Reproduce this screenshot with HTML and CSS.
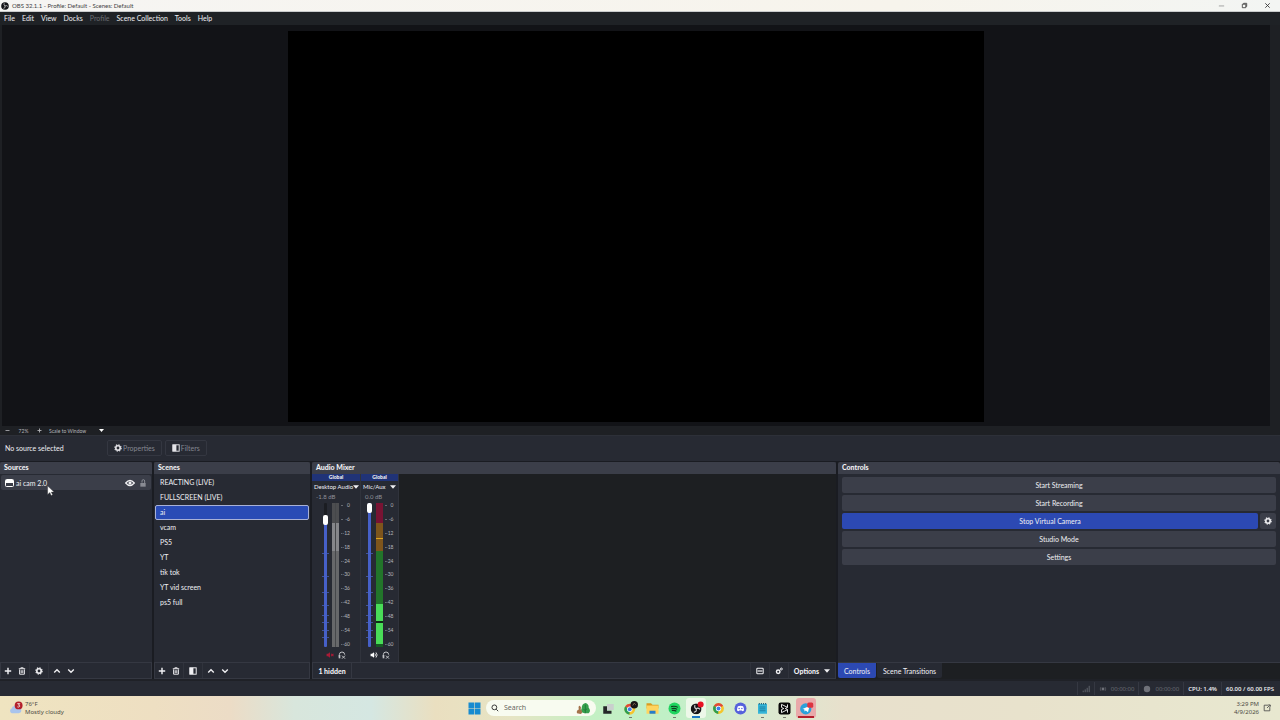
FILE: index.html
```html
<!DOCTYPE html>
<html lang="en">
<head>
<meta charset="utf-8">
<title>OBS 32.1.1 - Profile: Default - Scenes: Default</title>
<link rel="stylesheet" href="styles.css">
</head>
<body>
<svg class="defs" aria-hidden="true">
  <symbol id="plus" viewBox="0 0 10 10"><path d="M5 1v8M1 5h8" stroke="currentColor" stroke-width="1.8"/></symbol>
  <symbol id="minus" viewBox="0 0 10 10"><path d="M1 5h8" stroke="currentColor" stroke-width="1.6"/></symbol>
  <symbol id="trash" viewBox="0 0 10 10"><path d="M1 2.2h8M3.5 2V1h3v1M2 3v6h6V3M4 4v3.6M6 4v3.6" fill="none" stroke="currentColor" stroke-width="1.2"/></symbol>
  <symbol id="gear" viewBox="0 0 12 12"><circle cx="6" cy="6" r="3.3" fill="none" stroke="currentColor" stroke-width="2.4"/><circle cx="6" cy="6" r="4.8" fill="none" stroke="currentColor" stroke-width="1.6" stroke-dasharray="2 1.77"/></symbol>
  <symbol id="up" viewBox="0 0 10 10"><path d="M1.5 7L5 3.5 8.500 7" fill="none" stroke="currentColor" stroke-width="1.7"/></symbol>
  <symbol id="down" viewBox="0 0 10 10"><path d="M1.500 3L5 6.500 8.500 3" fill="none" stroke="currentColor" stroke-width="1.7"/></symbol>
  <symbol id="filter" viewBox="0 0 10 10"><rect x="1" y="1" width="8" height="8" fill="none" stroke="currentColor" stroke-width="1.200"/><path d="M1 1h4.500v8H1z" fill="currentColor"/></symbol>
  <symbol id="caret" viewBox="0 0 10 10"><path d="M0 2h10L5 8z" fill="currentColor"/></symbol>
  <symbol id="eye" viewBox="0 0 14 10"><path d="M1 5Q7-2 13 5 7 12 1 5z" fill="none" stroke="currentColor" stroke-width="1.800"/><circle cx="7" cy="5" r="2.200" fill="currentColor"/></symbol>
  <symbol id="unlock" viewBox="0 0 10 12"><path d="M3.500 5.500V3a2 2 0 0 1 4 0v3" fill="none" stroke="currentColor" stroke-width="1.500"/><path d="M1 6h8v5.500H1z" fill="currentColor"/></symbol>
  <symbol id="speaker" viewBox="0 0 14 12"><path d="M1 4h2.500L7 1v10L3.500 8H1z" fill="currentColor"/><path d="M8.500 3.500q2 2.500 0 5M10.500 1.500q4 4.500 0 9" fill="none" stroke="currentColor" stroke-width="1.400"/></symbol>
  <symbol id="muted" viewBox="0 0 14 12"><path d="M1 4h2.500L7 1v10L3.500 8H1z" fill="currentColor"/><path d="M9 4l4 4M13 4L9 8" stroke="currentColor" stroke-width="1.800"/></symbol>
  <symbol id="phones" viewBox="0 0 12 12"><path d="M2 9V5.500a4 4 0 0 1 8 0" fill="none" stroke="currentColor" stroke-width="1.500"/><path d="M1 6h2.500v5H1z" fill="currentColor"/><path d="M6 7l4.500 4.500M10.500 7L6 11.500" stroke="currentColor" stroke-width="1.500"/></symbol>
  <symbol id="obs" viewBox="0 0 20 20"><circle cx="10" cy="10" r="9.500" fill="#151518"/><g fill="none" stroke="#d8d8d8" stroke-width="1.800"><path d="M8 3q-2 5 2 7"/><path d="M17 11q-4-4-7-1"/><path d="M6 16q6-1 4-6"/></g></symbol>
  <symbol id="chrome" viewBox="0 0 20 20"><circle cx="10" cy="10" r="9" fill="#f4c52c"/><path d="M10 10L2.200 5.500A9 9 0 0 1 17.800 5.500z" fill="#df4a3a"/><path d="M10 10L2.200 5.500A9 9 0 0 0 9.500 19z" fill="#2c9d52"/><circle cx="10" cy="10" r="4.500" fill="#fff"/><circle cx="10" cy="10" r="3.300" fill="#3f7fe8"/></symbol>
</svg>

<header class="titlebar">
  <svg class="app-logo"><use href="#obs"/></svg>
  <span class="title">OBS 32.1.1 - Profile: Default - Scenes: Default</span>
  <button aria-label="Minimize"><svg viewBox="0 0 8 8"><path d="M1 4.500h6" stroke="#999"/></svg></button>
  <button aria-label="Restore"><svg viewBox="0 0 8 8"><path d="M1.500 2.500h4v4h-4zM3 2.500v-1h3.500V5h-1" fill="none" stroke="#444"/></svg></button>
  <button aria-label="Close"><svg viewBox="0 0 8 8"><path d="M1.500 1.500l5 5M6.500 1.500l-5 5" stroke="#333"/></svg></button>
</header>

<nav class="menubar">
  <button>File</button><button>Edit</button><button>View</button><button>Docks</button><button disabled>Profile</button><button>Scene Collection</button><button>Tools</button><button>Help</button>
</nav>

<main class="preview"><div class="canvas"></div></main>

<div class="zoombar">
  <button aria-label="Zoom out"><svg class="i5"><use href="#minus"/></svg></button>
  <span class="zoom-value">72%</span>
  <button aria-label="Zoom in"><svg class="i5"><use href="#plus"/></svg></button>
  <select aria-label="Preview scale"><option>Scale to Window</option></select>
  <svg class="i5 scale-caret"><use href="#caret"/></svg>
</div>

<div class="context">
  <span class="context-name">No source selected</span>
  <button disabled><svg class="i8"><use href="#gear"/></svg>Properties</button>
  <button disabled><svg class="i8"><use href="#filter"/></svg>Filters</button>
</div>

<div class="docks">
  <section class="dock">
    <h2>Sources</h2>
    <ul class="sources">
      <li class="source">
        <svg class="window-icon" viewBox="0 0 9 8"><rect x="0.500" y="0.500" width="8" height="7" rx="1" fill="none" stroke="#fff"/><path d="M1 1h7v3H1z" fill="#fff"/></svg>
        <span class="source-name">ai cam 2.0</span>
        <button aria-label="Hide source"><svg class="eye"><use href="#eye"/></svg></button>
        <button aria-label="Lock source" class="lock"><svg class="i8"><use href="#unlock"/></svg></button>
        <svg class="cursor" viewBox="0 0 10 14"><path d="M1 0v12l3-3 2 4.500 2-1L6 8.500h4z" fill="#fff" stroke="#444" stroke-width=".5"/></svg>
      </li>
    </ul>
    <div class="tools">
      <button aria-label="Add source"><svg class="i8"><use href="#plus"/></svg></button>
      <button aria-label="Remove source"><svg class="i8"><use href="#trash"/></svg></button>
      <button aria-label="Source properties" class="split wide"><svg class="i8"><use href="#gear"/></svg></button>
      <button aria-label="Move source up" class="split"><svg class="i8"><use href="#up"/></svg></button>
      <button aria-label="Move source down"><svg class="i8"><use href="#down"/></svg></button>
    </div>
  </section>

  <section class="dock">
    <h2>Scenes</h2>
    <ul class="scenes">
      <li>REACTING (LIVE)</li><li>FULLSCREEN (LIVE)</li><li class="selected">ai</li><li>vcam</li><li>PS5</li><li>YT</li><li>tik tok</li><li>YT vid screen</li><li>ps5 full</li>
    </ul>
    <div class="tools">
      <button aria-label="Add scene"><svg class="i8"><use href="#plus"/></svg></button>
      <button aria-label="Remove scene"><svg class="i8"><use href="#trash"/></svg></button>
      <button aria-label="Scene filters" class="split wide"><svg class="i8"><use href="#filter"/></svg></button>
      <button aria-label="Move scene up" class="split"><svg class="i8"><use href="#up"/></svg></button>
      <button aria-label="Move scene down"><svg class="i8"><use href="#down"/></svg></button>
    </div>
  </section>

  <section class="dock">
    <h2>Audio Mixer</h2>
    <div class="mixer">
      <div class="strip wide">
        <div class="global">Global</div>
        <button class="channel">Desktop Audio <svg class="i6"><use href="#caret"/></svg></button>
        <div class="db">-1.8 dB</div>
        <div class="levels">
          <input type="range" min="0" max="100" value="91" class="fader low" aria-label="Desktop Audio volume">
          <div class="meter idle"></div>
          <ol class="scale"><li>0</li><li>-6</li><li>-12</li><li>-18</li><li>-24</li><li>-30</li><li>-36</li><li>-42</li><li>-48</li><li>-54</li><li>-60</li></ol>
        </div>
        <div class="strip-tools">
          <button aria-label="Unmute Desktop Audio" class="is-muted"><svg class="i8"><use href="#muted"/></svg></button>
          <button aria-label="Monitor Desktop Audio"><svg class="i8"><use href="#phones"/></svg></button>
        </div>
      </div>
      <div class="strip">
        <div class="global">Global</div>
        <button class="channel">Mic/Aux <svg class="i6"><use href="#caret"/></svg></button>
        <div class="db">0.0 dB</div>
        <div class="levels">
          <input type="range" min="0" max="100" value="100" class="fader" aria-label="Mic/Aux volume">
          <div class="meter live"></div>
          <ol class="scale"><li>0</li><li>-6</li><li>-12</li><li>-18</li><li>-24</li><li>-30</li><li>-36</li><li>-42</li><li>-48</li><li>-54</li><li>-60</li></ol>
        </div>
        <div class="strip-tools">
          <button aria-label="Mute Mic/Aux" class="is-on"><svg class="i8"><use href="#speaker"/></svg></button>
          <button aria-label="Monitor Mic/Aux"><svg class="i8"><use href="#phones"/></svg></button>
        </div>
      </div>
    </div>
    <div class="tools mixer-tools">
      <button class="hidden-count">1 hidden</button>
      <button aria-label="Toggle layout" class="split wide end"><svg class="i8" viewBox="0 0 10 10"><rect x="1" y="1.500" width="8" height="7" rx="1" fill="none" stroke="currentColor" stroke-width="1.300"/><path d="M2 5h6" stroke="currentColor" stroke-width="1.500"/></svg></button>
      <button aria-label="Advanced audio properties" class="split wide"><svg class="i8" viewBox="0 0 10 10"><circle cx="4" cy="6" r="2.200" fill="none" stroke="currentColor" stroke-width="1.800"/><circle cx="8" cy="2.500" r="1.200" fill="none" stroke="currentColor" stroke-width="1.200"/></svg></button>
      <button class="options split">Options <svg class="i6"><use href="#caret"/></svg></button>
    </div>
  </section>

  <section class="dock controls">
    <h2>Controls</h2>
    <div class="actions">
      <button>Start Streaming</button>
      <button>Start Recording</button>
      <div class="action-row"><button class="active">Stop Virtual Camera</button><button class="vcam-settings" aria-label="Virtual camera settings"><svg class="i8"><use href="#gear"/></svg></button></div>
      <button>Studio Mode</button>
      <button>Settings</button>
    </div>
    <div class="tabs"><button class="current">Controls</button><button>Scene Transitions</button></div>
  </section>
</div>

<footer class="status">
  <span><svg class="i8" viewBox="0 0 10 10"><path d="M1.500 7v2M4 5.500V9M6.500 3.500V9M9 1v8" stroke="currentColor"/></svg></span>
  <span><svg class="i8" viewBox="0 0 10 10"><circle cx="5" cy="5" r="1.800" fill="currentColor"/><path d="M2.500 2.500q-2 2.500 0 5M7.500 2.500q2 2.500 0 5" fill="none" stroke="currentColor" stroke-width=".7"/></svg>00:00:00</span>
  <span><svg class="i8" viewBox="0 0 10 10"><circle cx="5" cy="5" r="4" fill="currentColor"/></svg>00:00:00</span>
  <span class="bright">CPU: 1.4%</span>
  <span class="bright">60.00 / 60.00 FPS</span>
</footer>

<footer class="taskbar">
  <button class="weather">
    <svg class="weather-icon" viewBox="0 0 16 16"><path d="M3 14a3 3 0 0 1 0-5.500A4 4 0 0 1 10 7a3.500 3.500 0 0 1 1 7z" fill="#a9c4ec"/><circle cx="11" cy="5" r="4.500" fill="#b3202b"/><path d="M9.500 3h2.800l-1.500 1.700q2 .3 1.400 1.500-.8 1.200-2.600.5" fill="none" stroke="#fff" stroke-width=".9"/></svg>
    <span><b>76°F</b>Mostly cloudy</span>
  </button>
  <div class="apps">
    <button aria-label="Start"><svg viewBox="0 0 20 20"><path d="M2 2h7.600v7.600H2zM10.400 2H18v7.600h-7.600zM2 10.400h7.600V18H2zM10.400 10.400H18V18h-7.600z" fill="#178bd0"/></svg></button>
    <label class="search">
      <svg class="i8" viewBox="0 0 10 10"><circle cx="4.200" cy="4.200" r="3" fill="none" stroke="#333" stroke-width="1.200"/><path d="M6.500 6.500L9 9" stroke="#333" stroke-width="1.200"/></svg>
      <input type="text" placeholder="Search" aria-label="Search">
      <svg class="art" viewBox="0 0 16 14"><path d="M9 12Q4 11 6 7q0-5 4-6 4 1 3.500 5 3 4 0 6z" fill="#35a04d"/><path d="M10 3v9M8 8l2 1 2-2" fill="none" stroke="#217a39"/><path d="M1 12q-1-3 2-4-1-4 1-4 2 1 1 4 3 3 0 5z" fill="#a3724a"/></svg>
    </label>
    <button aria-label="Task view"><svg viewBox="0 0 20 20"><path d="M8 4h9v8H8z" fill="#c9cfcd"/><path d="M3 7h5v6h6v4H3z" fill="#252728"/></svg></button>
    <button aria-label="Chrome profile" class="running"><svg viewBox="0 0 20 20"><use href="#chrome" x="1" y="3" width="16" height="16"/><circle cx="15" cy="5" r="5" fill="#161616"/><path d="M13 6l2-3 2 2" fill="none" stroke="#977a5d"/></svg></button>
    <button aria-label="File Explorer"><svg viewBox="0 0 20 20"><path d="M2 3h6l2 2h8v5H2z" fill="#d99b20"/><path d="M2 6h16v11H2z" fill="#ffd45e"/><path d="M6 13h8v4H6z" fill="#257ecb"/></svg></button>
    <button aria-label="Spotify" class="running"><svg viewBox="0 0 20 20"><circle cx="10" cy="10" r="8" fill="#1ed45f"/><path d="M5.500 7.500q5-1.500 9 1M6 10.300q4.500-1.200 7.500.8M6.500 12.800q3.500-.8 6 .8" fill="none" stroke="#103b20" stroke-width="1.400"/></svg></button>
    <button aria-label="OBS Studio" class="focused"><svg viewBox="0 0 20 20"><use href="#obs" x="2" y="3" width="15" height="15"/><circle cx="15.500" cy="4.500" r="4" fill="#e81123"/></svg></button>
    <button aria-label="Chrome"><svg viewBox="0 0 20 20"><use href="#chrome" x="2" y="2" width="16" height="16"/></svg></button>
    <button aria-label="Discord"><svg viewBox="0 0 20 20"><circle cx="10" cy="10" r="8" fill="#5661dc"/><path d="M6.500 7q3.500-1.500 7 0 1.500 3 1.200 5.500l-2.200 1-.8-1H8.300l-.8 1-2.200-1Q5 10 6.500 7z" fill="#fff"/><circle cx="8.200" cy="10" r="1" fill="#5661dc"/><circle cx="11.800" cy="10" r="1" fill="#5661dc"/></svg></button>
    <button aria-label="Notepad" class="running"><svg viewBox="0 0 20 20"><path d="M4 4h12v13H4z" fill="#35b5d8"/><path d="M5 3.500h10" stroke="#23667d" stroke-width="2" stroke-dasharray="1.500 1.300"/><path d="M6 8h8M6 10.500h8M6 13h8" stroke="#147091"/></svg></button>
    <button aria-label="Media app" class="running"><svg viewBox="0 0 20 20"><rect x="2" y="2" width="16" height="16" rx="3" fill="#080808"/><path d="M6 4.500v4l3 1.500-3 1.500v4M14 4.500v4L11 10l3 1.500v4M6 4.500l8 4M6 15.500l8-4" fill="none" stroke="#fff" stroke-width="1.200"/></svg></button>
    <button aria-label="Telegram" class="alert"><svg viewBox="0 0 20 20"><circle cx="9" cy="10.500" r="7.500" fill="#2aa1da"/><path d="M4.500 10.500L14 6.500l-2 8.500-3-2.500-1.500 1.500-.5-3z" fill="#fff"/><rect x="11" y="2" width="8" height="7" rx="2" fill="#dc3440"/></svg></button>
  </div>
  <div class="clock"><time>3:29 PM<br>4/9/2026</time><svg class="i8" viewBox="0 0 10 10"><path d="M7 1.500H1.500v7h7V4M5 5l3.500-3.500M7 .8l2.500.7L8.500 4" fill="none" stroke="#444"/></svg></div>
</footer>
</body>
</html>
```

FILE: styles.css
```css
* { box-sizing: border-box; }
body {
  margin: 0;
  min-height: 100vh;
  display: flex;
  flex-direction: column;
  background: #1e2024;
  color: #f0f0f3;
  font: 7px/10px Lato, "Open Sans", sans-serif;
}
button, input, select { font: inherit; color: inherit; border: 0; padding: 0; margin: 0; background: none; }
button { display: flex; align-items: center; justify-content: center; white-space: nowrap; }
ul, ol { list-style: none; margin: 0; padding: 0; }
svg { display: block; flex: none; }
.defs { display: none; }
.i5 { width: 5px; height: 5px; }
.i6 { width: 6px; height: 6px; }
.i8 { width: 8px; height: 8px; }

.titlebar {
  display: flex;
  align-items: center;
  height: 12px;
  padding: 0 1px;
  background: linear-gradient(90deg, #f6f5f3, #f7f4ec 70%, #f3f5f3);
  border-bottom: 1px solid #c9cbcc;
  color: #3f3f42;
  font-size: 6px;
}
.app-logo { width: 8px; height: 8px; margin-right: 3px; }
.title { flex: 1; }
.titlebar button { width: 23px; height: 10px; }
.titlebar button svg { width: 7px; height: 7px; }

.menubar { display: flex; height: 13px; padding: 0 0 2px 4px; gap: 7px; background: #1f2226; }
.menubar button:disabled { color: #6b6d73; }

.preview {
  flex: 400 1 0;
  min-height: 0;
  display: flex;
  justify-content: center;
  margin: 0 10px 0 2px;
  padding: 6px 0 4px;
  background: #121317;
}
.canvas { height: 100%; aspect-ratio: 16 / 9; background: #000; }

.zoombar { display: flex; align-items: center; height: 9px; padding-left: 5px; color: #b4b5ba; font-size: 5px; line-height: 8px; }
.zoom-value { width: 27px; text-align: center; }
.zoombar select { appearance: none; width: 50px; margin-left: 7px; }
.scale-caret { color: #fff; }

.context {
  display: flex;
  align-items: center;
  height: 26px;
  padding: 0 0 2px 5px;
  gap: 3px;
  background: #272a33;
  border-top: 1px solid #2d3038;
}
.context-name { width: 99px; }
.context button { height: 16px; padding: 0 6px; gap: 1px; border: 1px solid #343741; border-radius: 2px; color: #858891; }
.context button svg { color: #e4e4e8; }

.docks {
  flex: 222 1 0;
  display: grid;
  grid-template-columns: 152fr 156fr 524fr 442fr;
  gap: 2px;
  background: #1a1c22;
  padding-top: 1px;
}
.dock { display: flex; flex-direction: column; min-width: 0; background: #272a33; }
.dock h2 { margin: 0; height: 12px; padding-left: 4px; background: #3b3e49; border-radius: 2px 2px 0 0; font-size: 7px; line-height: 11px; font-weight: 900; }
.sources, .scenes { flex: 1; padding: 1px; }
.source { position: relative; display: flex; align-items: center; height: 15px; padding: 0 4px; background: #3b3e49; border-radius: 2px; }
.window-icon { width: 9px; height: 8px; margin-right: 2px; }
.source-name { flex: 1; }
.eye { width: 10px; height: 8px; }
.lock { margin-left: 4px; color: #8a8c94; }
.cursor { position: absolute; left: 46px; top: 11px; width: 7px; height: 10px; }
.scenes li { height: 15px; padding-left: 4px; line-height: 13px; border: 1px solid transparent; border-radius: 2px; }
.scenes .selected { background: #294bb5; border-color: #a8b1d6; }

.tools { display: flex; align-items: stretch; height: 17px; border: 1px solid #353842; }
.tools button { width: 14px; }
.tools .split { width: 16px; border-left: 1px solid #30333c; }
.tools .wide { width: 19px; }

.mixer { flex: 1; display: flex; background: #1d1f22; }
.strip { display: flex; flex-direction: column; width: 38px; background: #272a33; border-right: 1px solid #30333c; }
.strip.wide { width: 49px; }
.global { height: 7px; background: #203377; text-align: center; font-size: 5px; font-weight: 900; line-height: 7px; }
.channel { height: 11px; font-size: 6px; justify-content: space-between; padding: 0 2px; }
.db { padding-left: 4px; color: #8f9199; font-size: 6px; line-height: 9px; }
.levels { flex: 1; display: flex; justify-content: center; padding-top: 2px; }
.fader {
  appearance: none;
  writing-mode: vertical-lr;
  direction: rtl;
  width: 7px;
  height: auto;
  margin: 0 3px 0 0;
  background:
    linear-gradient(#40539b, #40539b) 0 35% / 7px 1px no-repeat,
    linear-gradient(#40539b, #40539b) 0 51% / 7px 1px no-repeat,
    linear-gradient(#40539b, #40539b) 0 62% / 7px 1px no-repeat,
    linear-gradient(#40539b, #40539b) 0 71% / 7px 1px no-repeat,
    linear-gradient(#40539b, #40539b) 0 78% / 7px 1px no-repeat,
    linear-gradient(#40539b, #40539b) 0 83% / 7px 1px no-repeat,
    linear-gradient(#40539b, #40539b) 0 89% / 7px 1px no-repeat,
    linear-gradient(#40539b, #40539b) 0 94% / 7px 1px no-repeat;
}
.fader::-webkit-slider-runnable-track { width: 3px; border-radius: 1px; background: #4660c8; }
.fader.low::-webkit-slider-runnable-track { background: linear-gradient(#1b1d22 10%, #4660c8 10%); }
.fader::-webkit-slider-thumb { appearance: none; width: 5px; height: 10px; margin-left: -1px; border-radius: 2px; background: #fff; }
.meter { width: 7px; margin-right: 2px; }
.idle { background: linear-gradient(90deg, transparent 3px, #45474a 3px 4px, transparent 4px), linear-gradient(#4c4d50 14%, #85868a 14% 33%, #67686a 33%); }
.live { background: linear-gradient(#781333 14%, #7e551c 14% 24%, #dda51f 24% 25%, #7e551c 25% 33%, #22752a 33% 70%, #49dc58 70% 82%, #102c17 82% 83%, #49dc58 83% 98%, #145b22 98%); }
.scale { display: flex; flex-direction: column; justify-content: space-between; width: 9px; color: #b4b6bc; font-size: 5px; line-height: 5px; }
.scale li { display: flex; justify-content: flex-end; }
.scale li::before { content: ""; width: 2px; height: 1px; margin: 2px auto 0 0; background: #666970; }
.strip-tools { display: flex; justify-content: center; align-items: center; gap: 4px; height: 15px; color: #c1c2c6; }
.strip-tools .is-muted { color: #a91b36; }
.strip-tools .is-on { color: #fff; }
.mixer-tools { font-weight: 900; }
.mixer-tools .hidden-count { width: 39px; border-right: 1px solid #353842; }
.mixer-tools .end { margin-left: auto; }
.mixer-tools .options { width: 47px; gap: 5px; }

.controls { background: #1d1f22; }
.actions { flex: 1; display: flex; flex-direction: column; gap: 2px; padding: 3px 4px; background: #272a33; }
.actions button { height: 16px; background: #3b3e49; border-radius: 2px; }
.action-row { display: flex; gap: 2px; }
.action-row .active { flex: 1; background: #2c49b3; }
.action-row .vcam-settings { width: 16px; }
.tabs { display: flex; gap: 1px; height: 17px; padding-bottom: 1px; border-top: 1px solid #353842; }
.tabs button { padding: 0 6px; background: #272a33; border-radius: 0 0 2px 2px; }
.tabs .current { background: #2c49b3; }

.status { display: flex; justify-content: flex-end; height: 17px; padding: 1px 2px 1px 0; background: #272a33; border-top: 2px solid #1f2127; color: #6f7179; font-family: "Open Sans", sans-serif; font-size: 6px; }
.status span { display: flex; align-items: center; gap: 4px; padding: 0 4px; border-left: 1px solid #353842; }
.status .bright { color: #f0f0f3; font-weight: 600; }

.taskbar {
  display: grid;
  grid-template-columns: 1fr auto 1fr;
  align-items: center;
  height: 24px;
  background: linear-gradient(90deg, #efe4c0, #eedfc2 12%, #ecdcc6 18%, #d8e6dc 23%, #d5e7e2 29%, #eadfc0 34%, #e6e4c4 40%, #c4f0c4 46%, #c0f0c6 52%, #d6ebd0 58%, #e8e0cc 66%, #e8e2cc 80%, #e8e8d0);
  color: #4c4a44;
  font-family: "Noto Sans", sans-serif;
  font-size: 6px;
  line-height: 8px;
}
.weather { justify-self: start; gap: 2px; padding-left: 9px; text-align: left; }
.weather-icon { width: 14px; height: 14px; }
.weather b { display: block; font-weight: 400; }
.apps { display: flex; align-items: center; gap: 2px; }
.apps button { position: relative; width: 20px; height: 20px; border-radius: 3px; }
.apps button svg { width: 15px; height: 15px; }
.search { display: flex; align-items: center; width: 110px; height: 16px; padding: 0 5px; gap: 5px; border-radius: 8px; background: #f8fbf0; }
.search input { flex: 1; min-width: 0; font-size: 7px; outline: 0; }
.search input::placeholder { color: #68685f; opacity: 1; }
.art { width: 15px; height: 13px; }
.apps .running::after, .apps .focused::after, .apps .alert::after { content: ""; position: absolute; bottom: 0; width: 3px; height: 1px; background: #777a70; }
.apps .focused { background: #edf8e9; }
.apps .focused::after { width: 8px; height: 2px; background: #1976c5; }
.apps .alert { background: #e9a9aa; }
.apps .alert::after { width: 16px; height: 2px; background: #b51e2c; }
.clock { justify-self: end; display: flex; align-items: center; gap: 4px; padding-right: 9px; text-align: right; }
```
